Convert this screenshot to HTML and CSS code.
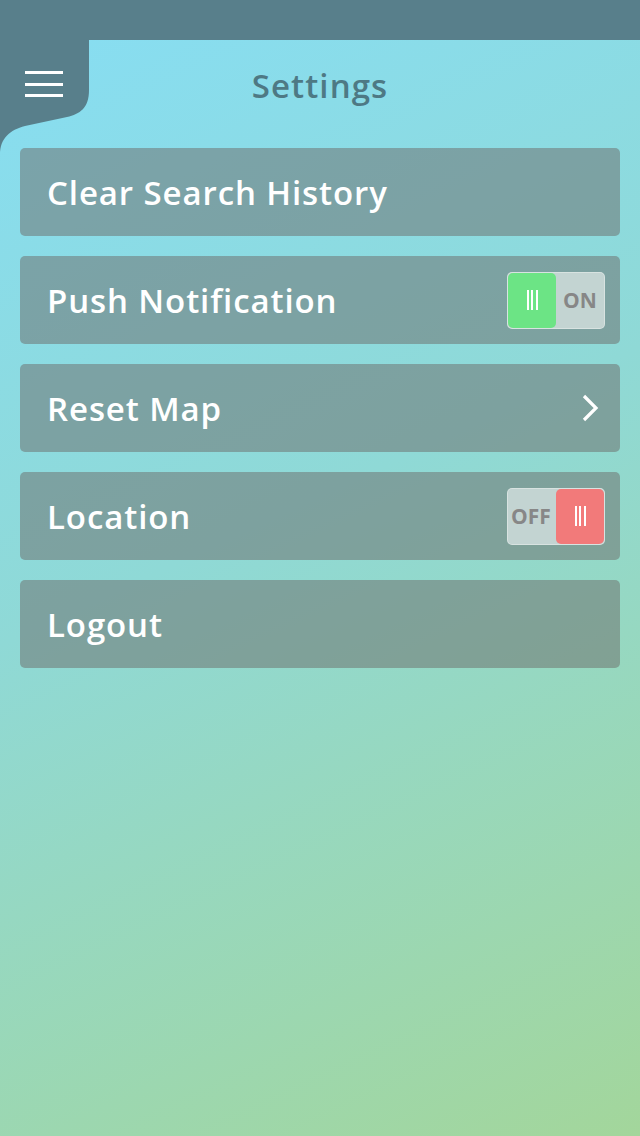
FILE: index.html
```html
<!DOCTYPE html>
<html>
<head>
<meta charset="utf-8">
<link rel="stylesheet" href="styles.css">
</head>
<body>
<div class="app">
  <div class="statusbar"></div>
  <header class="header">
    <svg class="tab" width="90" height="120" viewBox="0 0 90 120">
      <path d="M0 0 H89 V50 C89 68 80 74 67 77 L25 86 C10 90 0 98 0 115 Z" fill="#587f8b"/>
    </svg>
    <button class="menu" aria-label="Menu">
      <span></span><span></span><span></span>
    </button>
    <h1 class="title">Settings</h1>
  </header>
  <main class="list">
    <div class="row"><span class="label">Clear Search History</span></div>
    <div class="row">
      <span class="label">Push Notification</span>
      <div class="toggle on">
        <div class="knob"><i></i><i></i><i></i></div>
        <span class="state">ON</span>
      </div>
    </div>
    <div class="row">
      <span class="label">Reset Map</span>
      <svg class="chevron" width="18" height="30" viewBox="0 0 18 30">
        <path d="M3 3 L15 15 L3 27" fill="none" stroke="#fff" stroke-width="3.2"/>
      </svg>
    </div>
    <div class="row">
      <span class="label">Location</span>
      <div class="toggle off">
        <span class="state">OFF</span>
        <div class="knob"><i></i><i></i><i></i></div>
      </div>
    </div>
    <div class="row"><span class="label">Logout</span></div>
  </main>
</div>
</body>
</html>
```

FILE: styles.css
```css
html, body {
  margin: 0;
  padding: 0;
}
body {
  width: 640px;
  height: 1136px;
  overflow: hidden;
  font-family: "Open Sans", "Noto Sans", sans-serif;
}
.app {
  width: 640px;
  height: 1136px;
  background: linear-gradient(155deg, #87def4 0%, #8fd9d6 45%, #a3d69b 100%);
}
.statusbar {
  height: 40px;
  background: #587f8b;
}
.header {
  position: relative;
  height: 92px;
  display: flex;
  align-items: center;
  justify-content: center;
}
.tab {
  position: absolute;
  left: 0;
  top: 0;
  display: block;
}
.menu {
  position: absolute;
  left: 25px;
  top: 31px;
  width: 38px;
  height: 26px;
  padding: 0;
  border: 0;
  background: none;
  display: flex;
  flex-direction: column;
  justify-content: space-between;
}
.menu span {
  display: block;
  height: 3px;
  background: #fff;
}
.title {
  margin: 0 0 2px;
  font-size: 33px;
  font-weight: 600;
  color: #4e7984;
  letter-spacing: 1.1px;
}
.list {
  padding: 16px 20px 0;
  display: flex;
  flex-direction: column;
  gap: 20px;
}
.row {
  height: 88px;
  border-radius: 5px;
  background: rgba(108, 106, 104, 0.5);
  display: flex;
  align-items: center;
  justify-content: space-between;
  padding: 0 15px 0 27px;
}
.label {
  color: #fff;
  font-size: 33px;
  font-weight: 600;
  letter-spacing: 0.9px;
}
.chevron {
  margin-right: 6px;
  display: block;
}
.toggle {
  width: 96px;
  height: 55px;
  border: 1px solid rgba(255, 255, 255, 0.35);
  border-radius: 5px;
  background: #c3d4d2;
  display: flex;
  align-items: stretch;
}
.knob {
  width: 48px;
  border-radius: 5px;
  display: flex;
  align-items: center;
  justify-content: center;
  gap: 2.5px;
}
.knob i {
  width: 2px;
  height: 20px;
  background: #fff;
}
.on .knob { background: #6ce485; }
.off .knob { background: #f27a7a; }
.state {
  flex: 1;
  display: flex;
  align-items: center;
  justify-content: center;
  color: #878787;
  font-size: 21px;
  font-weight: 700;
}
.off .state {
  justify-content: flex-start;
  padding-left: 3px;
}
```
